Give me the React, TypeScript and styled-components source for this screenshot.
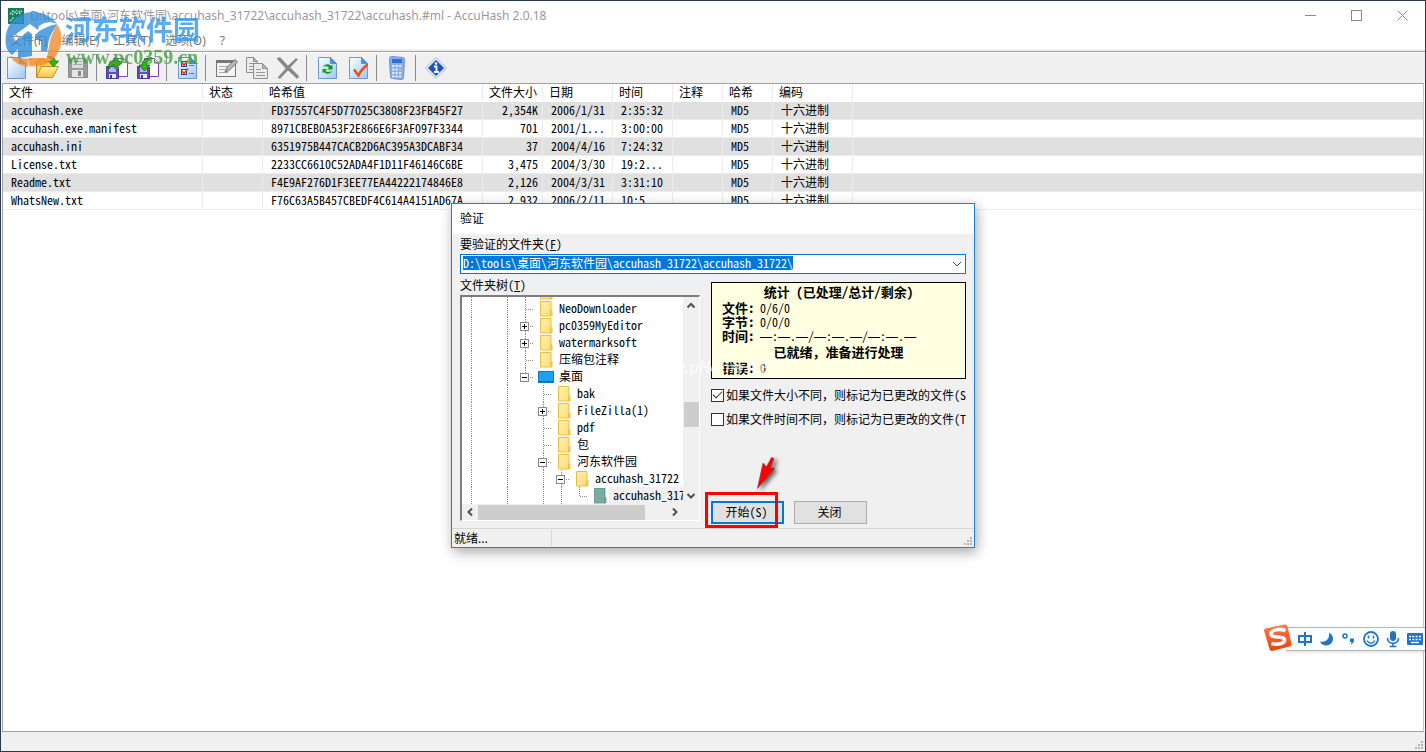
import React from 'react';
import styled, { createGlobalStyle, css } from 'styled-components';

const Global = createGlobalStyle`
  *, *::before, *::after { box-sizing: border-box; }
  html, body, #root { height: 100%; margin: 0; }
  body {
    font-family: "Noto Sans CJK SC", "Liberation Sans", sans-serif;
    font-size: 12px;
    line-height: 16px;
    color: #000;
  }
  button, input { font: inherit; font-feature-settings: inherit; color: inherit; padding: 0; margin: 0; }
`;

const bitmapText = css`
  font-family: "Noto Sans CJK SC", "Liberation Sans", sans-serif;
  font-feature-settings: "hwid" 1;
`;
const uiText = css`
  font-family: "Noto Sans", "Noto Sans CJK SC", sans-serif;
  font-feature-settings: normal;
`;

const Window = styled.div`
  position: relative;
  min-height: 100vh;
  display: flex;
  flex-direction: column;
  border: 1px solid #2b3a4f;
  background: #fff;
  overflow: hidden;
  ${bitmapText}
`;

const TitleBar = styled.header`
  display: flex;
  align-items: center;
  height: 29px;
  padding-left: 7px;
  color: #999;
  ${uiText}
`;
const TitleText = styled.h1`
  flex: 1;
  margin: 0;
  padding-left: 6px;
  font-size: 12px;
  font-weight: 400;
  white-space: nowrap;
`;
const CaptionButton = styled.button`
  width: 46px;
  height: 28px;
  display: grid;
  place-items: center;
  border: 0;
  background: none;
`;

const MenuBar = styled.nav`
  display: flex;
  height: 21px;
  align-items: center;
  padding: 2px 0 0 9px;
  gap: 14px;
  border-bottom: 2px solid #f0f0f0;
  color: #777;
  ${uiText}
`;
const MenuItem = styled.button`
  border: 0;
  background: none;
  white-space: nowrap;
`;

const Toolbar = styled.div`
  display: flex;
  align-items: center;
  height: 32px;
  border-top: 1px solid #a0a0a0;
  background: #f0f0f0;
  box-shadow: inset 0 1px 0 #fff;
`;
const ToolButton = styled.button`
  width: 31px;
  height: 30px;
  padding-right: 2px;
  display: grid;
  place-items: center;
  border: 0;
  background: none;
`;
const ToolSeparator = styled.span`
  width: 8px;
  height: 26px;
  display: block;
  &::before {
    content: "";
    display: block;
    width: 1px;
    height: 26px;
    margin-left: 2px;
    background: #8c8c8c;
  }
`;

const ListArea = styled.main`
  flex: 1;
  margin: 0 1px;
  border: 1px solid #a0a0a0;
  border-right-color: #c8c8c8;
  background: #fff;
`;
const FileTable = styled.table`
  width: 100%;
  table-layout: fixed;
  border-collapse: separate;
  border-spacing: 0;
  th, td {
    height: 18px;
    padding: 0 4px 0 8px;
    font-weight: 400;
    text-align: left;
    vertical-align: top;
    white-space: nowrap;
    overflow: hidden;
    border-right: 1px solid #ececec;
    border-bottom: 1px solid #ececec;
    line-height: 15px;
  }
  th { padding-left: 6px; border-bottom: 0; }
  th:last-child, td:last-child { border-right: 0; }
  tbody tr:nth-child(odd) td { background: #e0e0e0; }
`;
const Col = styled.col<{ $w?: number }>`
  width: ${p => (p.$w ? `${p.$w}px` : 'auto')};
`;
const SizeCell = styled.td`
  && { text-align: right; }
`;

const StatusBar = styled.footer`
  height: 19px;
  display: flex;
  align-items: flex-end;
  justify-content: flex-end;
  background: #f0f0f0;
`;

const SiteMark = styled.div`
  position: absolute;
  left: 3px;
  top: 9px;
  display: flex;
  gap: 2px;
  opacity: 0.78;
  pointer-events: none;
`;
const SiteNames = styled.div`
  display: flex;
  flex-direction: column;
  padding-top: 3px;
`;
const SiteName = styled.span`
  font: 700 27px/32px "Noto Sans CJK SC", sans-serif;
  color: #2b96ec;
`;
const SiteUrl = styled.span`
  font: 700 20px/24px "Liberation Serif", serif;
  color: #3f9f3f;
  padding-left: 1px;
`;

/* Dialog */
const Dialog = styled.section`
  position: absolute;
  left: 450px;
  top: 202px;
  width: 524px;
  display: flex;
  flex-direction: column;
  border: 1px solid #1883d7;
  background: #f0f0f0;
  box-shadow: 2px 4px 12px rgba(0, 0, 0, 0.35);
`;
const DialogTitle = styled.h2`
  margin: 0;
  padding: 0 8px;
  height: 30px;
  font-size: 12px;
  font-weight: 400;
  line-height: 27px;
  background: #fff;
`;
const DialogBody = styled.div`
  display: flex;
  flex-direction: column;
  padding: 2px 8px 4px;
`;
const FieldLabel = styled.label`
  height: 18px;
  line-height: 16px;
`;
const TreeLabel = styled.span`
  line-height: 18px;
`;
const Combo = styled.div`
  display: flex;
  align-items: center;
  height: 20px;
  margin-bottom: 2px;
  border: 1px solid #0078d7;
  background: #fff;
`;
const PathInput = styled.input`
  field-sizing: content;
  height: 14px;
  margin: 0 0 2px 2px;
  border: 0;
  outline: 0;
  background: #0078d7;
  color: #fff;
`;
const ComboArrow = styled.button`
  margin-left: auto;
  width: 17px;
  height: 18px;
  display: grid;
  place-items: center;
  border: 0;
  background: none;
`;
const Columns = styled.div`
  display: flex;
  gap: 11px;
`;
const TreeColumn = styled.div`
  width: 240px;
  display: flex;
  flex-direction: column;
  gap: 1px;
  margin-bottom: 3px;
`;
const TreeFrame = styled.div`
  display: grid;
  grid-template-columns: 221px 1fr;
  grid-template-rows: 207px 16px;
  border: 1px solid #fff;
  border-top: 2px solid #7c7c7c;
  border-left: 2px solid #7c7c7c;
  background: #f0f0f0;
`;
const TreeList = styled.ul`
  display: flex;
  flex-direction: column;
  justify-content: flex-end;
  margin: 0;
  padding: 0;
  list-style: none;
  overflow: hidden;
  background: #fff;
`;
const TreeRow = styled.li`
  flex: none;
  display: flex;
  height: 17px;
  white-space: nowrap;
`;
const Guide = styled.svg`
  flex: none;
  display: block;
`;
const TreeText = styled.span<{ $on?: boolean }>`
  padding: 0 4px;
  line-height: 15px;
  background: ${p => (p.$on ? '#f0f0f0' : 'transparent')};
`;
const VScroll = styled.div`
  display: flex;
  flex-direction: column;
  align-items: center;
`;
const HScroll = styled.div`
  display: flex;
  align-items: center;
`;
const ScrollButton = styled.button`
  width: 16px;
  height: 16px;
  display: grid;
  place-items: center;
  border: 0;
  background: none;
`;
const VThumb = styled.div`
  width: 15px;
  height: 25px;
  margin: 89px 0 auto;
  background: #cdcdcd;
`;
const HThumb = styled.div`
  width: 167px;
  height: 15px;
  margin-right: auto;
  background: #cdcdcd;
`;

const OptionsColumn = styled.div`
  flex: 1;
  min-width: 0;
  display: flex;
  flex-direction: column;
  padding-top: 6px;
`;
const Stats = styled.div`
  border: 1px solid #000;
  background: #ffffe1;
  padding: 0 10px 3px;
  margin-bottom: 8px;
  line-height: 14px;
`;
const StatsHeading = styled.p`
  margin: 0;
  text-align: center;
  font-size: 13px;
  font-weight: 700;
  line-height: 18px;
`;
const StatsRow = styled.p`
  margin: 0;
  display: flex;
  height: 14px;
  white-space: nowrap;
`;
const StatsLabel = styled.b`
  width: 38px;
  font-size: 13px;
`;
const Dash = styled.span`
  font-family: "Liberation Sans", sans-serif;
  font-feature-settings: normal;
`;
const FullWidth = styled.span`
  font-feature-settings: normal;
`;
const Check = styled.label`
  display: flex;
  align-items: center;
  gap: 2px;
  height: 16px;
  margin-bottom: 8px;
  white-space: nowrap;
`;
const CheckText = styled.span`
  min-width: 0;
  overflow: hidden;
`;
const CheckBox = styled.input`
  appearance: none;
  flex: none;
  width: 13px;
  height: 13px;
  border: 1px solid #333;
  background: #fff;
  &:checked::before {
    content: "";
    display: block;
    width: 9px;
    height: 5px;
    margin: 1px 1px;
    border-left: 1px solid #333;
    border-bottom: 1px solid #333;
    transform: rotate(-45deg);
  }
`;
const Actions = styled.div`
  position: relative;
  display: flex;
  gap: 10px;
  margin-top: auto;
`;
const PushButton = styled.button<{ $primary?: boolean }>`
  width: 73px;
  height: 23px;
  padding: 0 2px 2px 0;
  line-height: 16px;
  border: ${p => (p.$primary ? '2px solid #0078d7' : '1px solid #adadad')};
  background: #e1e1e1;
`;
const RedFrame = styled.div`
  position: absolute;
  left: -6px;
  top: -9px;
  width: 73px;
  height: 36px;
  border: 3px solid #f00;
  pointer-events: none;
`;
const ArrowMark = styled.svg`
  position: absolute;
  left: 42px;
  top: -46px;
  overflow: visible;
  filter: drop-shadow(3px 2px 2px rgba(0, 0, 0, 0.6));
  pointer-events: none;
`;
const DialogStatus = styled.div`
  display: flex;
  align-items: stretch;
  height: 19px;
  border-top: 1px solid #d7d7d7;
`;
const StatusPane = styled.span`
  ${uiText}
  width: 100px;
  margin: 1px 0;
  padding-left: 2px;
  line-height: 18px;
  border-right: 1px solid #d7d7d7;
`;
const Grip = styled.svg`
  margin: auto 1px 1px auto;
  display: block;
`;
const FaintMark = styled.span`
  position: absolute;
  left: 196px;
  top: 154px;
  font: italic 700 16px/20px "Liberation Sans", sans-serif;
  color: #fff;
  opacity: 0.6;
  pointer-events: none;
`;

/* Input method bar */
const ImeBar = styled.aside`
  position: absolute;
  right: -1px;
  top: 622px;
  display: flex;
  align-items: center;
  height: 29px;
`;
const ImeKeys = styled.div`
  display: flex;
  align-items: center;
  height: 24px;
  margin-left: -6px;
  margin-top: 2px;
  padding-left: 8px;
  border-top: 1px solid #a9bccb;
  border-bottom: 1px solid #a9bccb;
  background: #fbfdff;
  box-shadow: 0 1px 3px rgba(0, 0, 0, 0.15);
`;
const ImeKey = styled.button`
  width: 22px;
  height: 22px;
  display: grid;
  place-items: center;
  border: 0;
  background: none;
`;
const ImeLogo = styled.svg`
  position: relative;
  z-index: 1;
`;

const Hidden = styled.svg`
  position: absolute;
`;
const Defs = () => (
  <Hidden width="0" height="0" aria-hidden="true">
    <defs>
      <linearGradient id="page" x1="0" y1="0" x2="1" y2="1">
        <stop offset="0" stopColor="#fff" />
        <stop offset="1" stopColor="#9cc8f5" />
      </linearGradient>
      <linearGradient id="gold" x1="0" y1="0" x2="0" y2="1">
        <stop offset="0" stopColor="#fff2a0" />
        <stop offset="1" stopColor="#f6c63c" />
      </linearGradient>
      <linearGradient id="fold" x1="0" y1="0" x2="1" y2="1">
        <stop offset="0" stopColor="#ffedb0" />
        <stop offset="1" stopColor="#ffdf7c" />
      </linearGradient>
      <linearGradient id="sogou" x1="0" y1="0" x2="0" y2="1">
        <stop offset="0" stopColor="#ff7a45" />
        <stop offset="1" stopColor="#ee3f0a" />
      </linearGradient>
    </defs>
  </Hidden>
);

const Page = ({ children }: { children?: React.ReactNode }) => (
  <svg width="24" height="26" viewBox="0 0 24 26">
    <path d="M3.500 2.500h12l6 6v15h-18z" fill="url(#page)" stroke="#6b98d4" />
    <path d="M15.500 2.500v6h6z" fill="#4b93e0" stroke="#5d8fd0" />
    {children}
  </svg>
);

const NewIcon = () => <Page />;
const OpenIcon = () => (
  <svg width="26" height="26" viewBox="0 0 26 26">
    <path d="M2.500 22.500V6.500l2-2h5l2 2h8v4" fill="#f7cf52" stroke="#b88a1a" />
    <path d="M2.500 22.500l5-11h17l-6 11z" fill="url(#gold)" stroke="#c4921c" />
    <path d="M13 2c5-1.500 8 0 8 4h3.500L19.500 12l-5-6H18c0-2-2-3-5-4z" fill="#2eb51d" stroke="#177a0c" strokeWidth=".8" />
  </svg>
);
const SaveIcon = () => (
  <svg width="24" height="26" viewBox="0 0 24 26">
    <path d="M2.500 3.500h17l2 2v17h-19z" fill="#9a9a9a" stroke="#8a8a8a" />
    <rect x="6" y="4" width="11" height="9" fill="#dcdcdc" />
    <path d="M7 6.500h9M7 9.500h9" stroke="#aaa" />
    <rect x="6" y="15" width="11" height="7" fill="#e6e6e6" />
    <rect x="12" y="16" width="3" height="5" fill="#888" />
  </svg>
);
const DiskPage = ({ back }: { back?: boolean }) => (
  <svg width="26" height="26" viewBox="0 0 26 26">
    <path d="M9.500 3.500h10l4 4v14h-14z" fill="#fff" stroke="#8a3fc4" />
    <path d="M19.500 3.500v4h4z" fill="#ddd" stroke="#888" />
    <path d="M2.500 11.500h11l1 1v11h-12z" fill="#5a50b8" stroke="#463a9a" />
    <rect x="5" y="12" width="7" height="5" fill="#b8b4ec" />
    <rect x="5" y="19" width="7" height="4" fill="#e8e8f8" />
    <rect x="6" y="20" width="2" height="3" fill="#463a9a" />
    {back ? (
      <path d="M17 3c-7 0-10 3-10 7H4l5.500 6L15 10h-3.500c0-3 2-4.500 5.500-7z" fill="#33b51f" stroke="#12690c" strokeWidth=".9" />
    ) : (
      <path d="M5 14C3.500 8 7 5.500 11 5.500V2.500L18 8l-7 5.500v-4c-3 0-4 1.500-6 4.500z" fill="#33b51f" stroke="#12690c" strokeWidth=".9" />
    )}
  </svg>
);
const OptionsIcon = () => (
  <Page>
    <rect x="6.500" y="6.500" width="5" height="5" fill="#fff" stroke="#23409c" />
    <rect x="6.500" y="14.500" width="5" height="5" fill="#fff" stroke="#23409c" />
    <path d="M7 8l2 2.500 4-5M7 16l2 2.500 4-5" fill="none" stroke="#e33a1c" strokeWidth="1.600" />
    <path d="M14 10.500h5M14 18.500h5" stroke="#5577bb" />
  </Page>
);
const EditIcon = () => (
  <svg width="26" height="26" viewBox="0 0 26 26">
    <rect x="3.500" y="5.500" width="19" height="16" fill="#f4f4f4" stroke="#777" />
    <path d="M3 6.500h20" stroke="#777" strokeWidth="3" />
    <path d="M6 11.500h9M6 14.500h6M6 17.500h9" stroke="#aaa" />
    <path d="M12 17l1.500-4L22 4.500l2.500 2.500L16 15.500z" fill="#b8b8b8" stroke="#707070" />
  </svg>
);
const CopyIcon = () => (
  <svg width="26" height="26" viewBox="0 0 26 26">
    <path d="M2.500 2.500h7l4 4v11h-11z" fill="#ececec" stroke="#8e8e8e" />
    <path d="M9.500 2.500v4h4z" fill="#bbb" stroke="#8e8e8e" />
    <path d="M5 8.500h6M5 11.500h6M5 14.500h6" stroke="#999" />
    <path d="M9.500 8.500h9l5 5v10h-14z" fill="#ececec" stroke="#8e8e8e" />
    <path d="M18.500 8.500v5h5z" fill="#bbb" stroke="#8e8e8e" />
    <path d="M12 14.500h5M12 17.500h9M12 20.500h9" stroke="#999" />
  </svg>
);
const DeleteIcon = () => (
  <svg width="26" height="26" viewBox="0 0 26 26">
    <path d="M2 3.500l3-1L13 11l8-7.500 1.500 1L15 12.500l9 9-2 2-9-8.500-8 8.500-2-1 8-9z" fill="#858585" stroke="#858585" strokeWidth=".6" />
  </svg>
);
const RefreshIcon = () => (
  <Page>
    <path d="M8 12c1-3 6-4 8-1l1.500-1.500v5h-5l1.500-1.500c-1-2-4-2-6-1zM17 16c-1 3-6 4-8 1l-1.500 1.500v-4.500h4.500L10.500 15.500c1 2 4 2 6.500.5z" fill="#159a1d" />
  </Page>
);
const CheckIcon = () => (
  <Page>
    <path d="M8 14.500l4.500 6C14.500 16 17 13 21.500 9.500" fill="none" stroke="#f4470d" strokeWidth="2.400" />
  </Page>
);
const CalcIcon = () => (
  <svg width="20" height="26" viewBox="0 0 20 26">
    <path d="M4.500 1.500l11 1q2 0 2 2L16.500 22.500q0 2-2 2l-9-1q-2 0-2-2l-1-17q0-3 2-3z" fill="#86aeea" stroke="#6a8fd2" />
    <rect x="5" y="4" width="10" height="4" fill="#2f6fd4" />
    {[10.500, 14, 17.500, 21].map(y => [5, 8.500, 12].map(x => (
      <rect key={`${x}-${y}`} x={x} y={y - 0.5} width="2.400" height="2" fill={x === 12 && y === 14 ? '#e9a08a' : '#dce8fb'} />
    )))}
  </svg>
);
const InfoIcon = () => (
  <svg width="24" height="26" viewBox="0 0 24 26">
    <path d="M12 2.500L22.500 13 12 23.500 1.500 13z" fill="#e4ecf8" stroke="#a9bddb" />
    <path d="M12 5l8 8-8 8-8-8z" fill="#1c54c0" />
    <path d="M10 11.500h2.500v5.500M10 17h5" stroke="#fff" strokeWidth="1.800" fill="none" />
    <circle cx="12" cy="8.500" r="1.300" fill="#fff" />
  </svg>
);

const AppIcon = () => (
  <svg width="16" height="16" viewBox="0 0 16 16">
    <rect width="16" height="16" fill="#12805f" />
    <path d="M2 6l4-4M4 7l5-5M8 6l5-4M11 6l3-3M2 13l4-4M6 14l3-4M9 14l5-5M12 14l2-2" stroke="#d8f0e6" strokeWidth="1.200" strokeDasharray="2 1" />
  </svg>
);

const SiteLogo = () => (
  <svg width="59" height="60" viewBox="0 0 59 60">
    <path d="M2 36C-1 16 12 2 29 2c11 0 19 5 24 12-6-3-13-2-18 2l-1 4-8-6-18 13 3 5z" fill="#2b8ad6" />
    <path d="M2 36l10-5 12-10 4 3v22l-14 2v-9l-6 6q-5-4-6-9z" fill="#2b8ad6" />
    <path d="M31 25c7-7 14-9 22-11l-2 4c-4 6-7 12-7 19l-1 4h-6V30h-6z" fill="#2b8ad6" />
    <path d="M53 14c8 12 5 27-5 36-6 5-13 7-23 6l-1-8h19l2-12c1-8 4-14 8-22z" fill="#f08a2c" />
    <path d="M6 46l8 2 10 1v8C17 56 10 53 6 46z" fill="#f08a2c" />
  </svg>
);

type Kind = 'line' | 'none' | 'tee' | 'plus' | 'minus' | 'last';
const GuideCell = ({ kind, stop }: { kind: Kind; stop?: boolean }) => {
  const dots = { stroke: '#8a8a8a', strokeDasharray: '1 1' };
  const boxed = kind === 'plus' || kind === 'minus';
  return (
    <Guide width="18" height="17" viewBox="0 0 18 17" aria-hidden="true">
      {kind !== 'none' && <path d={kind === 'last' || stop ? 'M9.500 0v9' : 'M9.500 0v17'} {...dots} />}
      {(kind === 'tee' || kind === 'last' || boxed) && <path d="M10 9.500h8" {...dots} />}
      {boxed && (
        <>
          <rect x="4.500" y="5.500" width="8" height="8" fill="#fff" stroke="#8a8a8a" />
          <path d={kind === 'plus' ? 'M6 9.500h5M8.500 7v5' : 'M6 9.500h5'} stroke="#000" />
        </>
      )}
    </Guide>
  );
};
const FolderIcon = ({ tone }: { tone: 'folder' | 'desktop' | 'chosen' }) => (
  <Guide width="21" height="17" viewBox="-3 0 21 17" aria-hidden="true">
    {tone === 'desktop' ? (
      <>
        <rect x="1.500" y="3.500" width="15" height="11" fill="#1ba1f7" stroke="#1479c4" />
        <path d="M2 13.500h14" stroke="#0b5c9e" strokeDasharray="3 1" />
      </>
    ) : (
      <>
        <path d="M3.500 1.500h10.500v9h1v5.500H3.500z" fill={tone === 'chosen' ? '#7ba9a6' : 'url(#fold)'} stroke={tone === 'chosen' ? '#6a9d92' : '#e9bf3f'} />
        <path d="M13.500 11v5" stroke={tone === 'chosen' ? '#6a9d92' : '#e9bf3f'} />
      </>
    )}
  </Guide>
);

interface Node { cells: Kind[]; text: string; tone?: 'desktop' | 'chosen'; stop?: boolean }
const L: Kind = 'line';
const N: Kind = 'none';
const nodes: Node[] = [
  { cells: [L, N, L, 'tee'], text: '' },
  { cells: [L, N, L, 'tee'], text: 'NeoDownloader' },
  { cells: [L, N, L, 'plus'], text: 'pc0359MyEditor' },
  { cells: [L, N, L, 'plus'], text: 'watermarksoft' },
  { cells: [L, N, L, 'tee'], text: '压缩包注释' },
  { cells: [L, N, L, 'minus'], text: '桌面', tone: 'desktop', stop: true },
  { cells: [L, N, L, N, 'tee'], text: 'bak' },
  { cells: [L, N, L, N, 'plus'], text: 'FileZilla(1)' },
  { cells: [L, N, L, N, 'tee'], text: 'pdf' },
  { cells: [L, N, L, N, 'tee'], text: '包' },
  { cells: [L, N, L, N, 'minus'], text: '河东软件园' },
  { cells: [L, N, L, N, L, 'minus'], text: 'accuhash_31722' },
  { cells: [L, N, L, N, L, L, 'last'], text: 'accuhash_31722', tone: 'chosen' },
];

const Chevron = ({ d }: { d: string }) => (
  <svg width="10" height="10" viewBox="0 0 10 10"><path d={d} fill="none" stroke="#505050" strokeWidth="2" /></svg>
);
const UP = 'M1.500 7.500L5 4 8.500 7.500';
const DOWN = 'M1.500 3L5 6.500 8.500 3';
const LEFT = 'M7 1.500L3.500 5 7 8.500';
const RIGHT = 'M3 1.500L6.500 5 3 8.500';

const GripDots = () => (
  <Grip width="9" height="9" viewBox="0 0 9 9" aria-hidden="true">
    <path d="M6 0h2v2H6zM3 3h2v2H3zM6 3h2v2H6zM0 6h2v2H0zM3 6h2v2H3zM6 6h2v2H6z" fill="#b4b4b4" />
  </Grip>
);

const files = [
  ['accuhash.exe', 'FD37557C4F5D77025C3808F23FB45F27', '2,354K', '2006/1/31', '2:35:32'],
  ['accuhash.exe.manifest', '8971CBEB0A53F2E866E6F3AF097F3344', '701', '2001/1...', '3:00:00'],
  ['accuhash.ini', '6351975B447CACB2D6AC395A3DCABF34', '37', '2004/4/16', '7:24:32'],
  ['License.txt', '2233CC6610C52ADA4F1D11F46146C6BE', '3,475', '2004/3/30', '19:2...'],
  ['Readme.txt', 'F4E9AF276D1F3EE77EA44222174846E8', '2,126', '2004/3/31', '3:31:10'],
  ['WhatsNew.txt', 'F76C63A5B457CBEDF4C614A4151AD67A', '2,932', '2006/2/11', '10:5...'],
];
const columns: [string, number][] = [
  ['文件', 200], ['状态', 60], ['哈希值', 220], ['文件大小', 60], ['日期', 70],
  ['时间', 60], ['注释', 50], ['哈希', 50], ['编码', 80],
];

const tools: ([string, React.ReactNode] | null)[] = [
  ['新建', <NewIcon />], ['打开', <OpenIcon />], ['保存', <SaveIcon />], null,
  ['导出', <DiskPage />], ['导入', <DiskPage back />], null,
  ['选项', <OptionsIcon />], null,
  ['编辑', <EditIcon />], ['复制', <CopyIcon />], ['删除', <DeleteIcon />], null,
  ['更新', <RefreshIcon />], ['验证', <CheckIcon />], null,
  ['计算器', <CalcIcon />], null,
  ['关于', <InfoIcon />],
];

const EmptyTime = () => (
  <span>
    {'—:—.—/—:—.—/—:—.—'.split('').map((c, i) => (c === '—' ? <Dash key={i}>{c}</Dash> : c))}
  </span>
);

const VerifyDialog = () => (
  <Dialog role="dialog" aria-labelledby="verify-title">
    <DialogTitle id="verify-title">验证</DialogTitle>
    <DialogBody>
      <FieldLabel htmlFor="folder">要验证的文件夹(<u>F</u>)</FieldLabel>
      <Combo>
        <PathInput id="folder" defaultValue={'D:\\tools\\桌面\\河东软件园\\accuhash_31722\\accuhash_31722\\'} spellCheck={false} />
        <ComboArrow aria-label="展开">
          <svg width="10" height="10" viewBox="0 0 10 10"><path d="M1 3l4 4 4-4" fill="none" stroke="#444" /></svg>
        </ComboArrow>
      </Combo>
      <Columns>
        <TreeColumn>
          <TreeLabel>文件夹树(<u>T</u>)</TreeLabel>
          <TreeFrame>
            <TreeList>
              {nodes.map((n, i) => (
                <TreeRow key={i}>
                  {n.cells.map((c, j) => (
                    <GuideCell key={j} kind={c} stop={n.stop && j === n.cells.length - 1} />
                  ))}
                  <FolderIcon tone={n.tone ?? 'folder'} />
                  <TreeText $on={n.tone === 'chosen'}>{n.text}</TreeText>
                </TreeRow>
              ))}
            </TreeList>
            <VScroll>
              <ScrollButton aria-label="向上"><Chevron d={UP} /></ScrollButton>
              <VThumb />
              <ScrollButton aria-label="向下"><Chevron d={DOWN} /></ScrollButton>
            </VScroll>
            <HScroll>
              <ScrollButton aria-label="向左"><Chevron d={LEFT} /></ScrollButton>
              <HThumb />
              <ScrollButton aria-label="向右"><Chevron d={RIGHT} /></ScrollButton>
            </HScroll>
          </TreeFrame>
        </TreeColumn>
        <OptionsColumn>
          <Stats>
            <StatsHeading>统计 (已处理/总计/剩余)</StatsHeading>
            <StatsRow><StatsLabel>文件:</StatsLabel>0/6/0</StatsRow>
            <StatsRow><StatsLabel>字节:</StatsLabel>0/0/0</StatsRow>
            <StatsRow><StatsLabel>时间:</StatsLabel><EmptyTime /></StatsRow>
            <StatsHeading><FullWidth>已就绪，准备进行处理</FullWidth></StatsHeading>
            <StatsRow><StatsLabel>错误:</StatsLabel>0</StatsRow>
          </Stats>
          <Check>
            <CheckBox type="checkbox" defaultChecked />
            <CheckText><FullWidth>如果文件大小不同，则标记为已更改的文件</FullWidth>(S)</CheckText>
          </Check>
          <Check>
            <CheckBox type="checkbox" />
            <CheckText><FullWidth>如果文件时间不同，则标记为已更改的文件</FullWidth>(T)</CheckText>
          </Check>
          <Actions>
            <PushButton $primary>开始(S)</PushButton>
            <PushButton>关闭</PushButton>
            <RedFrame />
            <ArrowMark width="36" height="36" viewBox="0 0 36 36" aria-hidden="true">
              <path d="M4.500 33.500L10 8l3.500 4L18.500 2.500l2.500 1L17.500 13l4 .5z" fill="#f00" stroke="#8c2a2a" strokeWidth=".6" />
            </ArrowMark>
          </Actions>
        </OptionsColumn>
      </Columns>
    </DialogBody>
    <DialogStatus>
      <StatusPane>就绪...</StatusPane>
      <GripDots />
    </DialogStatus>
    <FaintMark>www.pHome.NET</FaintMark>
  </Dialog>
);

const BLUE = '#1f74c9';

export default function App() {
  return (
    <>
      <Global />
      <Defs />
      <Window>
        <TitleBar>
          <AppIcon />
          <TitleText>D:\tools\桌面\河东软件园\accuhash_31722\accuhash_31722\accuhash.#ml - AccuHash 2.0.18</TitleText>
          <CaptionButton aria-label="最小化"><svg width="11" height="11"><path d="M0 5.500h11" stroke="#8a8a8a" /></svg></CaptionButton>
          <CaptionButton aria-label="最大化"><svg width="11" height="11"><rect x=".5" y=".5" width="10" height="10" fill="none" stroke="#8a8a8a" /></svg></CaptionButton>
          <CaptionButton aria-label="关闭"><svg width="11" height="11"><path d="M.5.5l10 10M10.500.5l-10 10" stroke="#8a8a8a" /></svg></CaptionButton>
        </TitleBar>
        <MenuBar>
          {['文件(F)', '编辑(E)', '工具(T)', '选项(O)', '?'].map(m => <MenuItem key={m}>{m}</MenuItem>)}
        </MenuBar>
        <Toolbar>
          {tools.map((t, i) => t
            ? <ToolButton key={i} aria-label={t[0]}>{t[1]}</ToolButton>
            : <ToolSeparator key={i} />)}
        </Toolbar>
        <ListArea>
          <FileTable>
            <colgroup>
              {columns.map(([n, w]) => <Col key={n} $w={w} />)}
              <Col />
            </colgroup>
            <thead>
              <tr>{columns.map(([n]) => <th key={n}>{n}</th>)}<th aria-label="空" /></tr>
            </thead>
            <tbody>
              {files.map(([name, hash, size, date, time]) => (
                <tr key={name}>
                  <td>{name}</td><td /><td>{hash}</td><SizeCell>{size}</SizeCell><td>{date}</td>
                  <td>{time}</td><td /><td>MD5</td><td>十六进制</td><td />
                </tr>
              ))}
            </tbody>
          </FileTable>
        </ListArea>
        <StatusBar><GripDots /></StatusBar>

        <SiteMark>
          <SiteLogo />
          <SiteNames>
            <SiteName>河东软件园</SiteName>
            <SiteUrl>www.pc0359.cn</SiteUrl>
          </SiteNames>
        </SiteMark>

        <VerifyDialog />

        <ImeBar>
          <ImeLogo width="28" height="28" viewBox="0 0 28 28">
            <path d="M0 6.500Q0 5 1.500 4.500L21 .5q2 0 2.500 2L27.500 20q0 2-2 2.500L8 27q-2 0-2.500-2z" fill="url(#sogou)" />
            <path d="M21.500 6.500C15 4 6.500 6 7 10.500c.5 4 13 1 13.500 5 .5 4.500-7 5.500-13 4" fill="none" stroke="#fff" strokeWidth="3.600" />
          </ImeLogo>
          <ImeKeys>
            <ImeKey aria-label="中文">
              <svg width="16" height="16"><path d="M2 5h12v6H2zM8 1v14" fill="none" stroke={BLUE} strokeWidth="2" /></svg>
            </ImeKey>
            <ImeKey aria-label="半角">
              <svg width="16" height="16"><path d="M10 1.500c5 3 5 8 2 11-3 3-9 2.500-11-2 6 1.500 10-3 9-9z" fill={BLUE} /></svg>
            </ImeKey>
            <ImeKey aria-label="标点">
              <svg width="16" height="16"><circle cx="4" cy="5" r="2" fill="none" stroke={BLUE} strokeWidth="1.500" /><path d="M9 7.500h4c.5 3-1 5.500-4 6.500 1.500-1.500 1.500-2 1.500-3H9z" fill={BLUE} /></svg>
            </ImeKey>
            <ImeKey aria-label="表情">
              <svg width="18" height="18"><circle cx="9" cy="9" r="7" fill="none" stroke={BLUE} strokeWidth="1.800" /><path d="M6.500 5.500v3M11.500 5.500v3M5 10.500c2 3.500 6 3.500 8 0" fill="none" stroke={BLUE} strokeWidth="1.500" /></svg>
            </ImeKey>
            <ImeKey aria-label="语音">
              <svg width="16" height="18"><rect x="5" y="1" width="6" height="10" rx="3" fill={BLUE} /><path d="M2.500 8c0 7 11 7 11 0M8 13v3M4.500 16.500h7" fill="none" stroke={BLUE} strokeWidth="1.600" /></svg>
            </ImeKey>
            <ImeKey aria-label="键盘">
              <svg width="16" height="14"><rect y="1" width="16" height="12" rx="1" fill={BLUE} /><path d="M2 4.500h12M2 7.500h12" stroke="#fff" strokeWidth="1.600" strokeDasharray="2 1.300" /><path d="M4 10.500h8" stroke="#fff" strokeWidth="1.400" /></svg>
            </ImeKey>
          </ImeKeys>
        </ImeBar>
      </Window>
    </>
  );
}
